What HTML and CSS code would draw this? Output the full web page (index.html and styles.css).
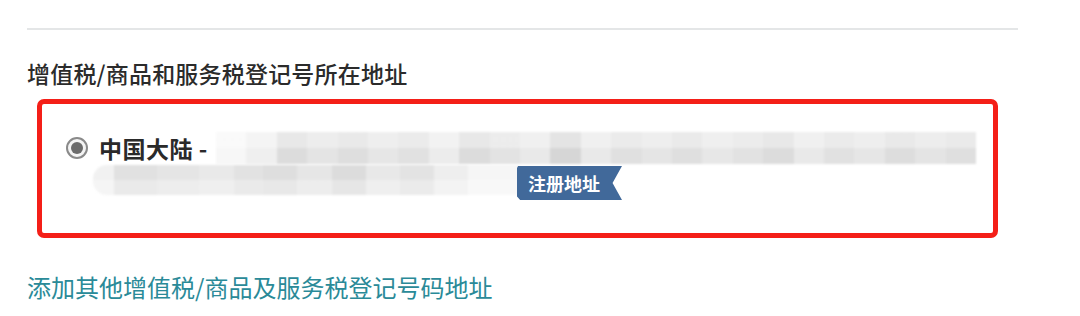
FILE: index.html
```html
<!DOCTYPE html>
<html lang="zh">
<head>
<meta charset="utf-8">
<link rel="stylesheet" href="styles.css">
</head>
<body>
<div class="page">
  <div class="divider"></div>
  <h2 class="title">增值税/商品和服务税登记号所在地址</h2>
  <div class="box">
    <div class="row1">
      <span class="radio"><span class="dot"></span></span>
      <span class="label">中国大陆 -</span>
      <span class="blur blur1"></span>
    </div>
    <div class="row2">
      <span class="blur blur2"></span>
      <span class="badge">注册地址</span>
    </div>
  </div>
  <a class="add" href="#">添加其他增值税/商品及服务税登记号码地址</a>
</div>
</body>
</html>
```

FILE: styles.css
```css
html, body {
  margin: 0;
  padding: 0;
  background: #ffffff;
}
body {
  font-family: "Noto Sans CJK SC", "Noto Sans", "Liberation Sans", sans-serif;
  color: #333333;
}
.page {
  padding: 28px 0 0 27px;
  width: 991px;
}
.divider {
  height: 2px;
  background: #e4e6e7;
}
.title {
  margin: 27px 0 0 0;
  font-size: 23px;
  line-height: 32px;
  font-weight: 500;
  color: #2b2b2b;
  letter-spacing: 0.2px;
}
.box {
  margin: 10px 0 0 10px;
  width: 951px;
  height: 129px;
  border: 5px solid #f41f18;
  border-radius: 7px;
  box-sizing: content-box;
  position: relative;
}
.row1 {
  display: flex;
  align-items: center;
  height: 34px;
  margin-top: 27px;
  padding-left: 24px;
}
.radio {
  width: 18px;
  height: 18px;
  border: 2px solid #8a8a8a;
  border-radius: 50%;
  display: flex;
  align-items: center;
  justify-content: center;
  background: #f4f4f4;
  flex: none;
}
.dot {
  width: 12px;
  height: 12px;
  border-radius: 50%;
  background: #6b6b6b;
}
.label {
  margin-left: 11px;
  font-size: 23px;
  font-weight: 700;
  color: #2a2a2a;
  white-space: nowrap;
  letter-spacing: 0.5px;
}
.blur {
  display: block;
  filter: blur(1.2px);
}
.blur1 {
  margin-left: 8px;
  width: 760px;
  height: 32px;
  background:
    linear-gradient(to bottom, rgba(255,255,255,0.35) 0 50%, rgba(0,0,0,0) 50% 100%),
    linear-gradient(to right,
      #f7f7f7 0 4%, #efefef 4% 8%, #dcdcdc 8% 12%, #e4e4e4 12% 16%,
      #dedede 16% 20%, #e6e6e6 20% 24%, #e1e1e1 24% 28%, #ececec 28% 32%,
      #dcdcdc 32% 36%, #e3e3e3 36% 40%, #e9e9e9 40% 44%, #d6d6d6 44% 48%,
      #e9e9e9 48% 52%, #e0e0e0 52% 56%, #e5e5e5 56% 60%, #dfdfdf 60% 64%,
      #e7e7e7 64% 68%, #e2e2e2 68% 72%, #dcdcdc 72% 76%, #e9e9e9 76% 80%,
      #e1e1e1 80% 84%, #e6e6e6 84% 88%, #dddddd 88% 92%, #e4e4e4 92% 96%,
      #dfdfdf 96% 100%);
}
.row2 {
  display: flex;
  align-items: flex-start;
  padding-left: 51px;
}
.blur2 {
  width: 426px;
  height: 30px;
  border-radius: 14px 0 0 14px;
  background:
    linear-gradient(to bottom, rgba(0,0,0,0) 0 50%, rgba(255,255,255,0.3) 50% 100%),
    linear-gradient(to right,
      #f1f1f1 0 5%, #e1e1e1 5% 15%, #e5e5e5 15% 25%, #e9e9e9 25% 33%,
      #e2e2e2 33% 40%, #dedede 40% 48%, #e6e6e6 48% 56%, #dcdcdc 56% 64%,
      #e8e8e8 64% 72%, #e3e3e3 72% 80%, #eeeeee 80% 88%, #f6f6f6 88% 100%);
}
.badge {
  margin-top: 1px;
  margin-left: -2px;
  height: 34px;
  line-height: 34px;
  padding: 0 22px 0 11px;
  background: #41699a;
  color: #ffffff;
  font-size: 18px;
  font-weight: 700;
  white-space: nowrap;
  clip-path: polygon(1% 0, 100% 0, 91% 50%, 100% 100%, 3% 100%, 0 90%, 0 6%);
}
.add {
  display: inline-block;
  margin-top: 33px;
  font-size: 24px;
  line-height: 32px;
  color: #2a8a98;
  text-decoration: none;
}
```
